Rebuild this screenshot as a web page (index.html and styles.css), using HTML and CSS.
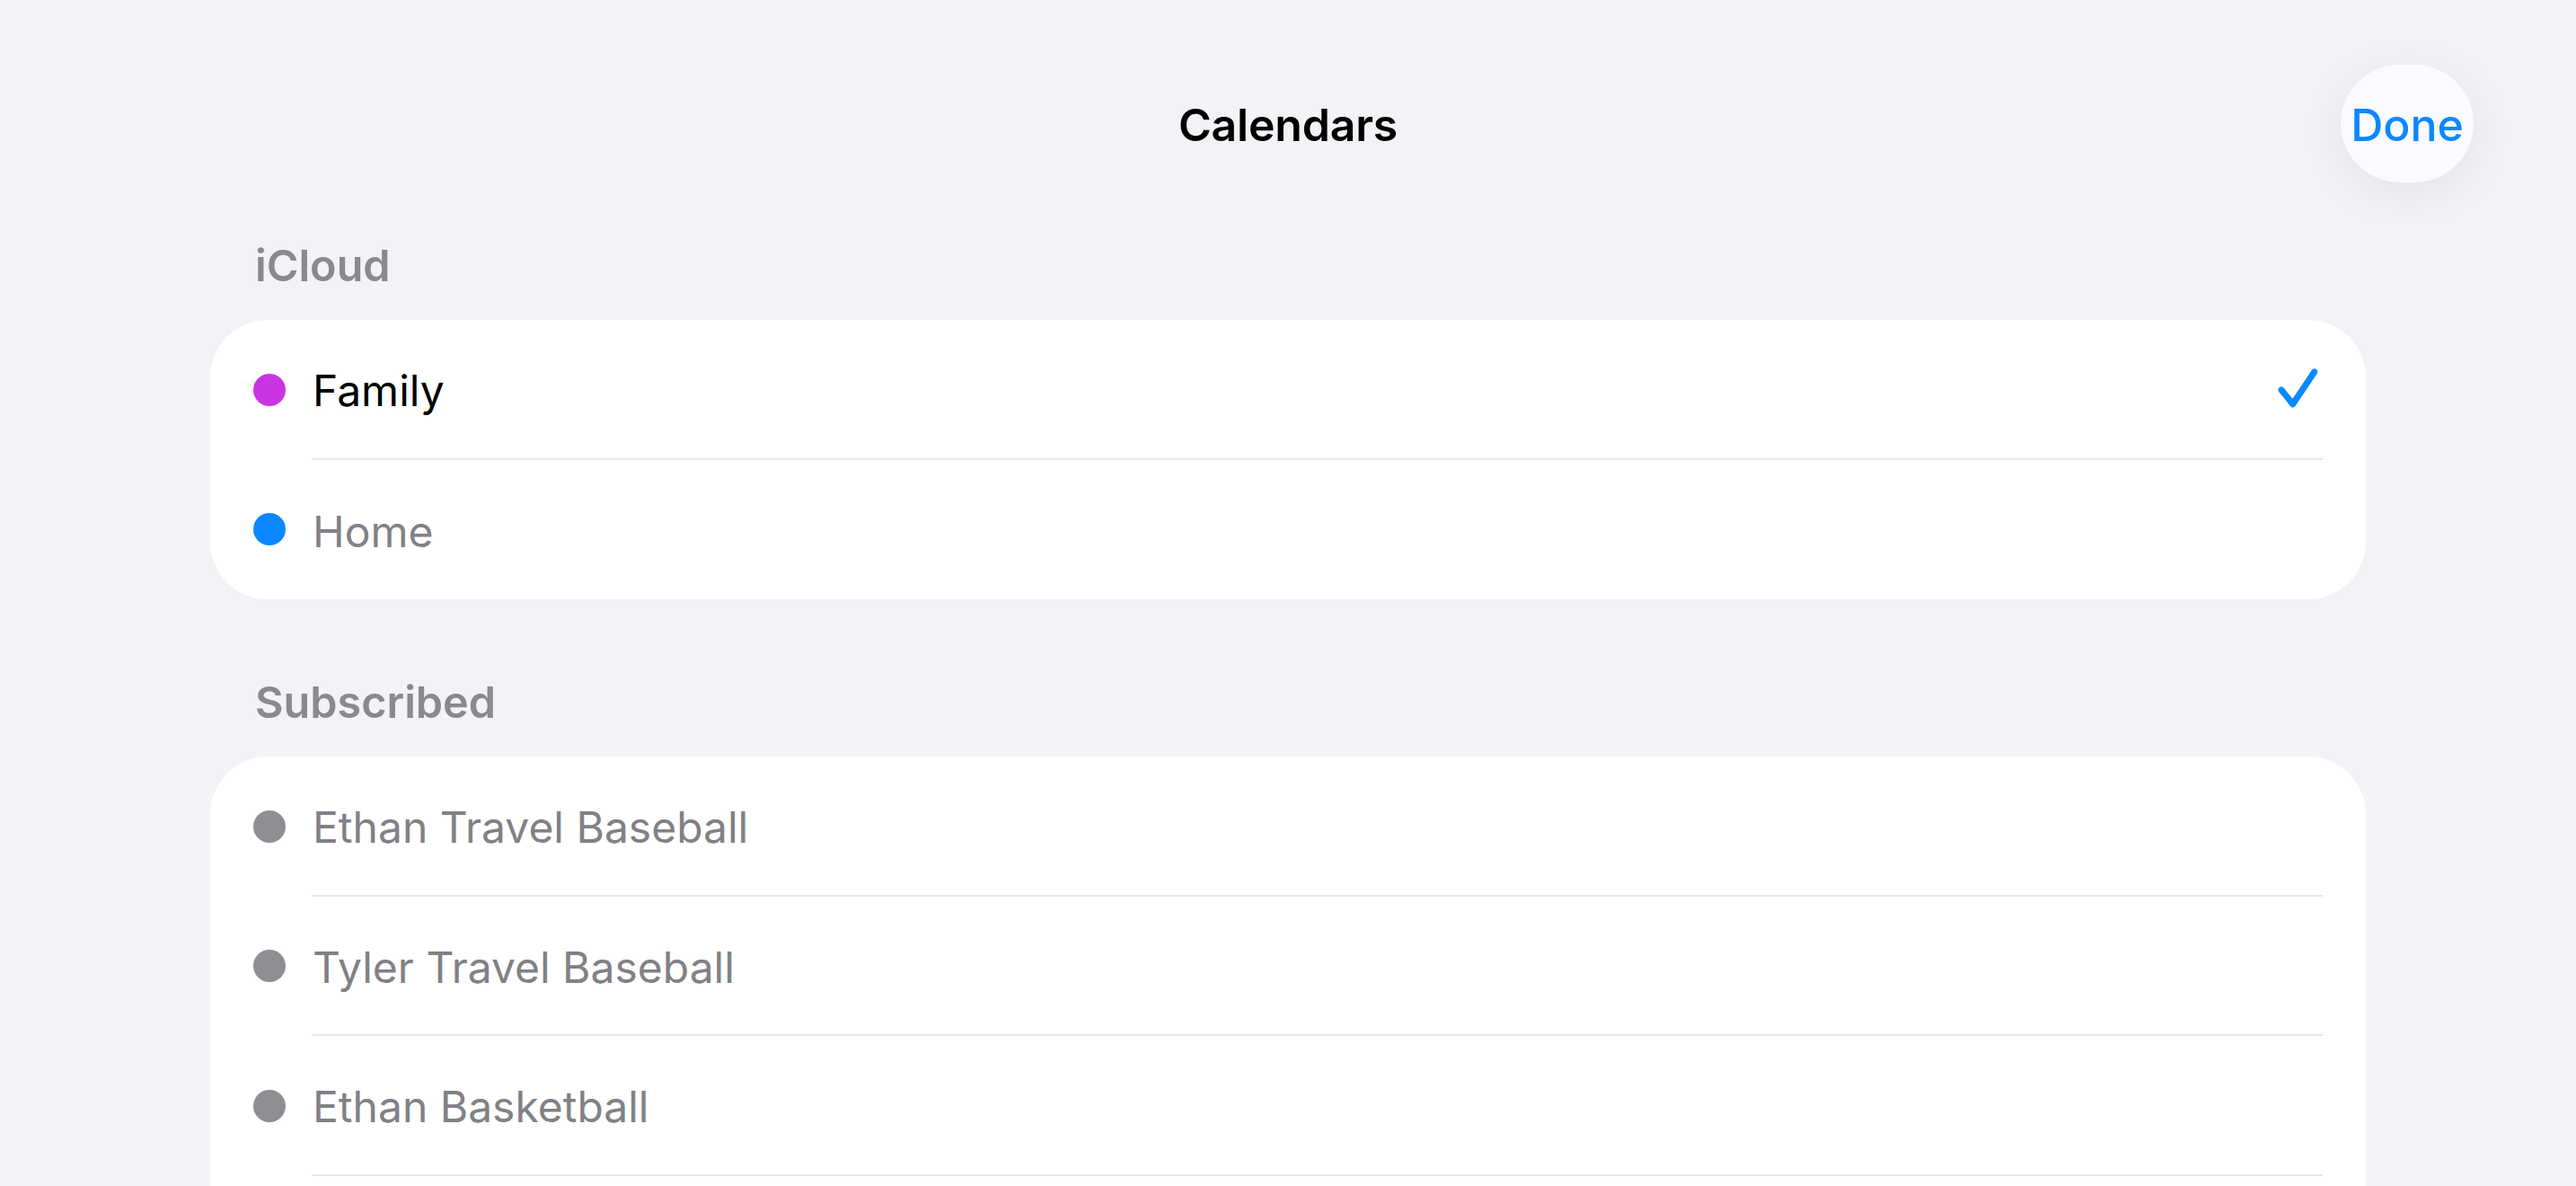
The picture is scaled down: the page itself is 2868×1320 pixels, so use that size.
FILE: index.html
```html
<!DOCTYPE html>
<html lang="en">
  <head>
    <meta charset="UTF-8" />
    <meta name="viewport" content="width=device-width, initial-scale=1.0" />
    <title>Calendars</title>
    <link rel="stylesheet" href="styles.css">
  </head>
  <body>
    <header class="top-bar">
      <div></div>
      <h1 class="title">Calendars</h1>
      <div class="actions">
        <button class="done-btn">Done</button>
      </div>
    </header>

    <main class="content">
      <!-- iCloud -->
      <section class="group">
        <h2 class="group-title">iCloud</h2>
        <ul class="list">
          <li class="row">
            <span class="dot dot-family"></span>
            <div class="row-body">
              <span class="row-label is-on">Family</span>
              <svg class="check" width="52" height="52" viewBox="0 0 52 52">
                <polyline points="8,27 20.7,42.7 44.7,7" fill="none" stroke="#0a88ff" stroke-width="7" stroke-linecap="round" stroke-linejoin="round" />
              </svg>
            </div>
          </li>
          <li class="row">
            <span class="dot dot-home"></span>
            <div class="row-body">
              <span class="row-label">Home</span>
            </div>
          </li>
        </ul>
      </section>

      <!-- Subskrybowane -->
      <section class="group">
        <h2 class="group-title">Subscribed</h2>
        <ul class="list list-open">
          <li class="row">
            <span class="dot"></span>
            <div class="row-body">
              <span class="row-label">Ethan Travel Baseball</span>
            </div>
          </li>
          <li class="row">
            <span class="dot"></span>
            <div class="row-body">
              <span class="row-label">Tyler Travel Baseball</span>
            </div>
          </li>
          <li class="row">
            <span class="dot"></span>
            <div class="row-body">
              <span class="row-label">Ethan Basketball</span>
            </div>
          </li>
        </ul>
      </section>
    </main>
  </body>
</html>
```

FILE: styles.css
```css
body {
  margin: 0;
  background: #f2f2f7;
  font-family: Inter, "Noto Sans", sans-serif;
  color: #000;
  height: 1320px;
  overflow: hidden;
}

.top-bar {
  display: grid;
  grid-template-columns: 1fr auto 1fr;
  align-items: center;
  height: 131px;
  padding: 72px 114px 0;
}

.title {
  margin: 0;
  font-size: 50px;
  font-weight: 600;
  letter-spacing: -0.2px;
  padding-top: 2px;
}

.actions {
  display: flex;
  justify-content: flex-end;
}

.done-btn {
  width: 148px;
  height: 131px;
  padding: 2px 0 0;
  border: none;
  border-radius: 66px;
  background: #fafaff;
  color: #0a88ff;
  font-family: inherit;
  font-size: 50px;
  font-weight: 500;
  box-shadow: 0 10px 50px rgba(0, 0, 0, 0.07);
  cursor: pointer;
}

.content {
  padding: 0 234px;
}

.group-title {
  margin: 65px 0 32px;
  padding-left: 50px;
  font-size: 48.5px;
  line-height: 56px;
  font-weight: 600;
  color: #8a8a8e;
}

.group + .group .group-title {
  margin-top: 87px;
}

.list {
  list-style: none;
  margin: 0;
  padding: 0;
  background: #fff;
  border-radius: 64px;
}

.list-open {
  padding-bottom: 80px;
}

.row {
  display: flex;
  align-items: center;
  gap: 30px;
  height: 155.5px;
  padding-left: 48px;
}

.dot {
  flex: none;
  width: 36px;
  height: 36px;
  border-radius: 50%;
  background: #8e8e93;
}

.dot-family {
  background: #c935e0;
}

.dot-home {
  background: #0a88ff;
}

.row-body {
  flex: 1;
  align-self: stretch;
  display: flex;
  align-items: center;
  justify-content: space-between;
  margin-right: 48px;
  padding-right: 2px;
  border-bottom: 2px solid #e6e6e8;
}

.row:last-child .row-body {
  border-bottom: none;
}

.list-open .row:last-child .row-body {
  border-bottom: 2px solid #e6e6e8;
}

.row-label {
  font-size: 48px;
  color: #818185;
  padding-top: 4px;
}

.row-label.is-on {
  color: #000;
}
```
